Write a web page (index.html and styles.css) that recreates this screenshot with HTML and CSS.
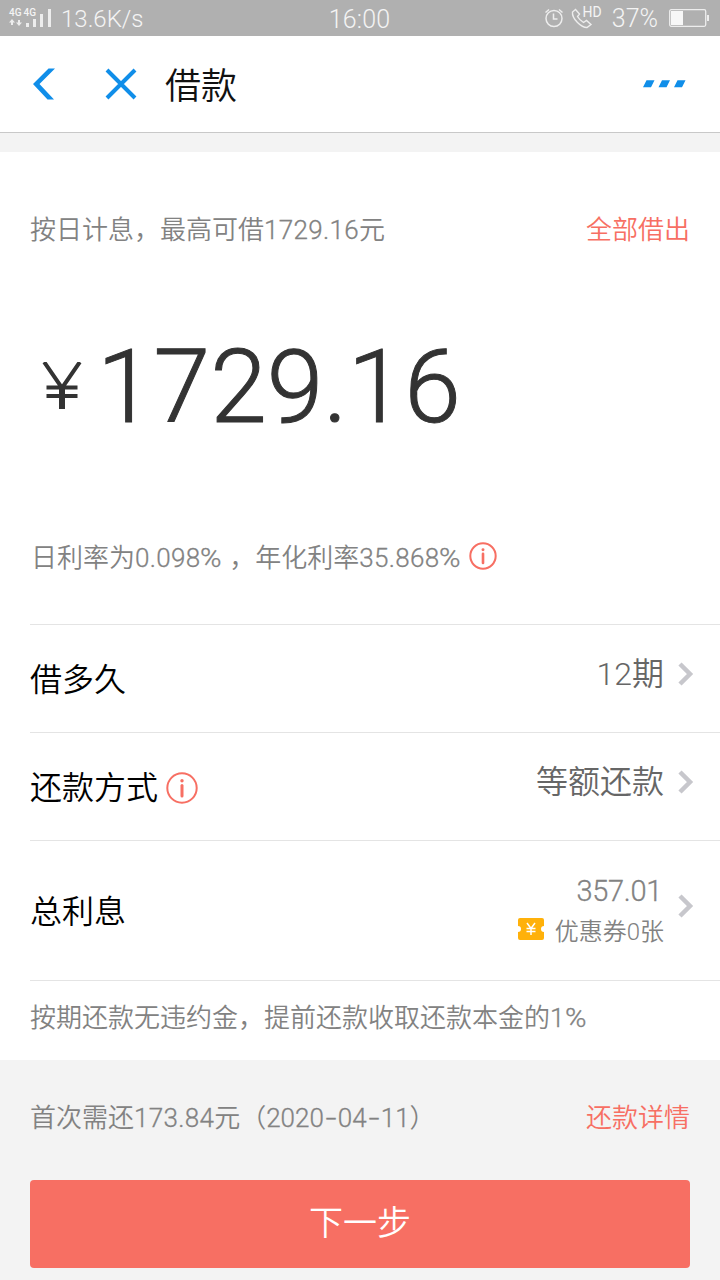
FILE: index.html
```html
<!DOCTYPE html>
<html lang="zh-CN">
<head>
    <meta charset="UTF-8">
    <meta name="viewport" content="width=device-width, initial-scale=1.0">
    <title>借款</title>
    <link rel="stylesheet" href="styles.css">
</head>
<body>
    <div class="status-bar">
        <div class="status-left">
            <div class="signal">
                <div class="network"><span>4G</span><span>4G</span></div>
                <svg class="bars" width="43" height="19" viewBox="0 0 43 19" fill="#ededed">
                    <path d="M3 10l3 3.500H4V16H2v-2.500H0zM10 17l-3-3.500h2V11h2v2.500h2z"/>
                    <path d="M17 14h3v4h-3zM24 10h3v8h-3zM31 5h3v13h-3zM39 0h3v18h-3z"/>
                </svg>
            </div>
            <span class="speed">13.6K/s</span>
        </div>
        <span class="clock">16:00</span>
        <div class="status-right">
            <svg width="20" height="20" viewBox="0 0 20 20" fill="none" stroke="#ededed" stroke-width="1.500">
                <circle cx="10" cy="10.500" r="8"/>
                <path d="M9.500 5.500v5.500h4M1.500 4.500l3.500-3M15 1.500l3.500 3" />
            </svg>
            <div class="call">
                <svg width="22" height="22" viewBox="0 0 22 22" fill="none" stroke="#ededed" stroke-width="1.400">
                    <path d="M4.500 2.500L1.500 5C1 9 3 12 6.500 15.500S13 20.500 16 20.500l4-3-4.500-4-3 2C10 14 8 12 6.500 9.500l2-2.500z"/>
                </svg>
                <span class="hd">HD</span>
            </div>
            <span class="percent">37%</span>
            <svg class="battery" width="40" height="18" viewBox="0 0 40 18">
                <rect x="0.700" y="0.700" width="36" height="16.600" rx="1.500" fill="none" stroke="#ededed" stroke-width="1.300"/>
                <rect x="2" y="2" width="12" height="14" fill="#f7f7f7"/>
                <rect x="38" y="6" width="2" height="6" fill="#ededed"/>
            </svg>
        </div>
    </div>

    <div class="nav">
        <svg class="back" width="24" height="32" viewBox="0 0 24 32" fill="#108ee9">
            <path d="M15.500 0.500H22L6.500 16 21 31.500h-6.500L0 16z"/>
        </svg>
        <svg class="close" width="32" height="32" viewBox="0 0 32 32" fill="none" stroke="#108ee9" stroke-width="4">
            <path d="M2 2l28 28M30 2L2 30"/>
        </svg>
        <h1>借款</h1>
        <svg class="more" width="43" height="8" viewBox="0 0 43 8" fill="#108ee9">
            <path d="M3.500 0.300h8L8 7.300H0zM19 0.300h8l-3.500 7h-8zM34.500 0.300h8l-3.500 7h-8z"/>
        </svg>
    </div>

    <div class="panel">
        <div class="limit">
            <span>按日计息，最高可借<span class="num">1729.16</span>元</span>
            <a class="link">全部借出</a>
        </div>

        <div class="amount">
            <svg class="yen" width="40" height="47" viewBox="0 0 40 47" fill="none" stroke="#333">
                <path d="M2.200 0L20 26 37.800 0M4.500 25.500h31M4.500 34h31" stroke-width="4"/>
                <path d="M20 25v22" stroke-width="6"/>
            </svg>
            <span class="amount-value">1729.16</span>
        </div>

        <div class="rate">
            <span>日利率为<span class="num">0.098<span class="pct">%</span></span> ，年化利率<span class="num">35.868<span class="pct">%</span></span></span>
            <svg class="info" width="28" height="28" viewBox="0 0 32 32">
                <circle cx="16" cy="16" r="14.500" fill="none" stroke="#f76f63" stroke-width="2.300"/>
                <circle cx="16" cy="8.800" r="1.700" fill="#f76f63"/>
                <path d="M16 13.500v10.500" stroke="#f76f63" stroke-width="3" stroke-linecap="round"/>
            </svg>
        </div>

        <div class="row">
            <span class="label">借多久</span>
            <span class="value">12期</span>
            <svg class="arrow" width="16" height="24" viewBox="0 0 16 24"><path d="M2 2l10 10L2 22"/></svg>
        </div>
        <div class="row">
            <span class="label">还款方式</span>
            <svg class="info" width="32" height="32" viewBox="0 0 32 32">
                <circle cx="16" cy="16" r="14.700" fill="none" stroke="#f76f63" stroke-width="2"/>
                <circle cx="16" cy="8.800" r="1.700" fill="#f76f63"/>
                <path d="M16 13.500v10.500" stroke="#f76f63" stroke-width="3" stroke-linecap="round"/>
            </svg>
            <span class="value">等额还款</span>
            <svg class="arrow" width="16" height="24" viewBox="0 0 16 24"><path d="M2 2l10 10L2 22"/></svg>
        </div>
        <div class="row interest">
            <span class="label">总利息</span>
            <div class="interest-value">
                <span class="sum">357.01</span>
                <div class="coupon">
                    <svg width="26" height="22" viewBox="0 0 26 22">
                        <path d="M2 0h22a2 2 0 0 1 2 2v6a3 3 0 0 0 0 6v6a2 2 0 0 1-2 2H2a2 2 0 0 1-2-2v-6a3 3 0 0 0 0-6V2a2 2 0 0 1 2-2z" fill="#ffb10a"/>
                        <path d="M9 5l4 5.500L17 5M8.500 10.500h9M8.500 13.500h9M13 10v7" fill="none" stroke="#fff" stroke-width="1.500"/>
                    </svg>
                    <span>优惠券0张</span>
                </div>
            </div>
            <svg class="arrow" width="16" height="24" viewBox="0 0 16 24"><path d="M2 2l10 10L2 22"/></svg>
        </div>
        <div class="note">按期还款无违约金，提前还款收取还款本金的<span class="num">1<span class="pct">%</span></span></div>
    </div>

    <div class="footer">
        <div class="first-pay">
            <span>首次需还<span class="num">173.84</span>元（<span class="date">2020<span class="dash">-</span>04<span class="dash">-</span>11</span>）</span>
            <a class="link">还款详情</a>
        </div>
        <button class="btn">下一步</button>
    </div>
</body>
</html>
```

FILE: styles.css
```css
* {
    box-sizing: border-box;
}

body {
    margin: 0;
    height: 1280px;
    overflow: hidden;
    background: #f3f3f3;
    color: #828282;
    font-family: Roboto, "Noto Sans CJK SC", sans-serif;
    font-weight: 350;
    font-size: 26px;
    white-space: nowrap;
}

/* status bar */
.status-bar {
    display: grid;
    grid-template-columns: 1fr auto 1fr;
    align-items: center;
    height: 36px;
    padding: 0 11px 0 9px;
    background: #b0b0b0;
    color: #f4f4f4;
    font-size: 25px;
    line-height: 30px;
}

.status-left,
.status-right {
    display: flex;
    align-items: center;
}

.status-left {
    gap: 9px;
}

.status-right {
    justify-content: flex-end;
}

.speed {
    padding-top: 2px;
    font-size: 24px;
}

.clock {
    padding: 4px 0 0 1px;
    letter-spacing: 0.2px;
}

.percent {
    padding-top: 2px;
}

.signal {
    display: grid;
    width: 43px;
    height: 19px;
}

.network,
.bars {
    grid-area: 1 / 1;
}

.network {
    display: flex;
    gap: 2px;
    font-size: 10px;
    font-weight: 500;
    line-height: 8px;
}

.call {
    display: flex;
    margin: 0 10px 0 7px;
}

.hd {
    margin: -4px 0 0 -10px;
    font-size: 14px;
    font-weight: 400;
    line-height: 18px;
}

.battery {
    margin-left: 11px;
}

/* title bar */
.nav {
    display: flex;
    align-items: center;
    height: 97px;
    padding: 0 34px 0 33px;
    background: #fff;
    border-bottom: 1px solid #c8c8c8;
}

.close {
    margin-left: 48px;
}

.nav h1 {
    margin: 0 0 0 28px;
    padding-top: 5px;
    color: #111;
    font-size: 36px;
    font-weight: 350;
    line-height: 90px;
}

.more {
    margin-left: auto;
}

/* loan form */
.panel {
    height: 908px;
    margin-top: 19px;
    padding-left: 30px;
    background: #fff;
}

.limit,
.first-pay {
    display: flex;
    justify-content: space-between;
    padding-right: 30px;
}

.limit {
    padding-top: 58px;
    line-height: 40px;
}

.num,
.date {
    -webkit-text-stroke: 0.3px;
}

.num {
    letter-spacing: 0.3px;
}

.pct {
    display: inline-block;
    margin-right: 3px;
    transform: scaleX(1.12);
    transform-origin: left;
}

.link {
    color: #f76f63;
}

.amount {
    display: flex;
    align-items: center;
    height: 200px;
    margin-top: 35px;
    padding-left: 12px;
    color: #333;
}

.amount-value {
    margin-left: 15px;
    padding-top: 3px;
    font-size: 102px;
    line-height: 120px;
    -webkit-text-stroke: 1px #333;
}

.rate {
    display: flex;
    align-items: center;
    gap: 7px;
    height: 139px;
    padding: 2px 0 0 1px;
}

.row {
    display: flex;
    align-items: center;
    height: 108px;
    padding-right: 26px;
    border-top: 1px solid #e4e4e4;
    font-size: 32px;
}

.label {
    padding-bottom: 4px;
    color: #000;
}

.row .info {
    margin: 2px 0 0 8px;
}

.value {
    margin: -16px 0 0 auto;
    color: #666;
}

.arrow {
    margin-left: 14px;
    margin-top: -10px;
    fill: none;
    stroke: #c7c7cc;
    stroke-width: 4.5;
}

.interest {
    height: 140px;
}

.interest-value {
    display: flex;
    flex-direction: column;
    align-items: flex-end;
    margin-left: auto;
}

.sum {
    margin-right: 2px;
    font-size: 29px;
    letter-spacing: -0.3px;
    line-height: 42px;
    -webkit-text-stroke: 0.3px;
}

.coupon {
    display: flex;
    align-items: center;
    gap: 11px;
    font-size: 24px;
    line-height: 40px;
}

.coupon svg {
    margin-bottom: 6px;
}

.note {
    border-top: 1px solid #e4e4e4;
    line-height: 74px;
}

/* bottom */
.footer {
    padding: 38px 30px 0;
}

.first-pay {
    padding-right: 0;
    line-height: 40px;
}

.dash {
    display: inline-block;
    width: 14px;
    text-align: center;
    transform: scaleX(1.5);
}

.btn {
    display: block;
    width: 100%;
    height: 88px;
    margin-top: 42px;
    padding: 0 0 7px;
    border: none;
    border-radius: 4px;
    background: #f76f63;
    color: #fff;
    font-family: inherit;
    font-size: 34px;
    font-weight: 350;
}
```
